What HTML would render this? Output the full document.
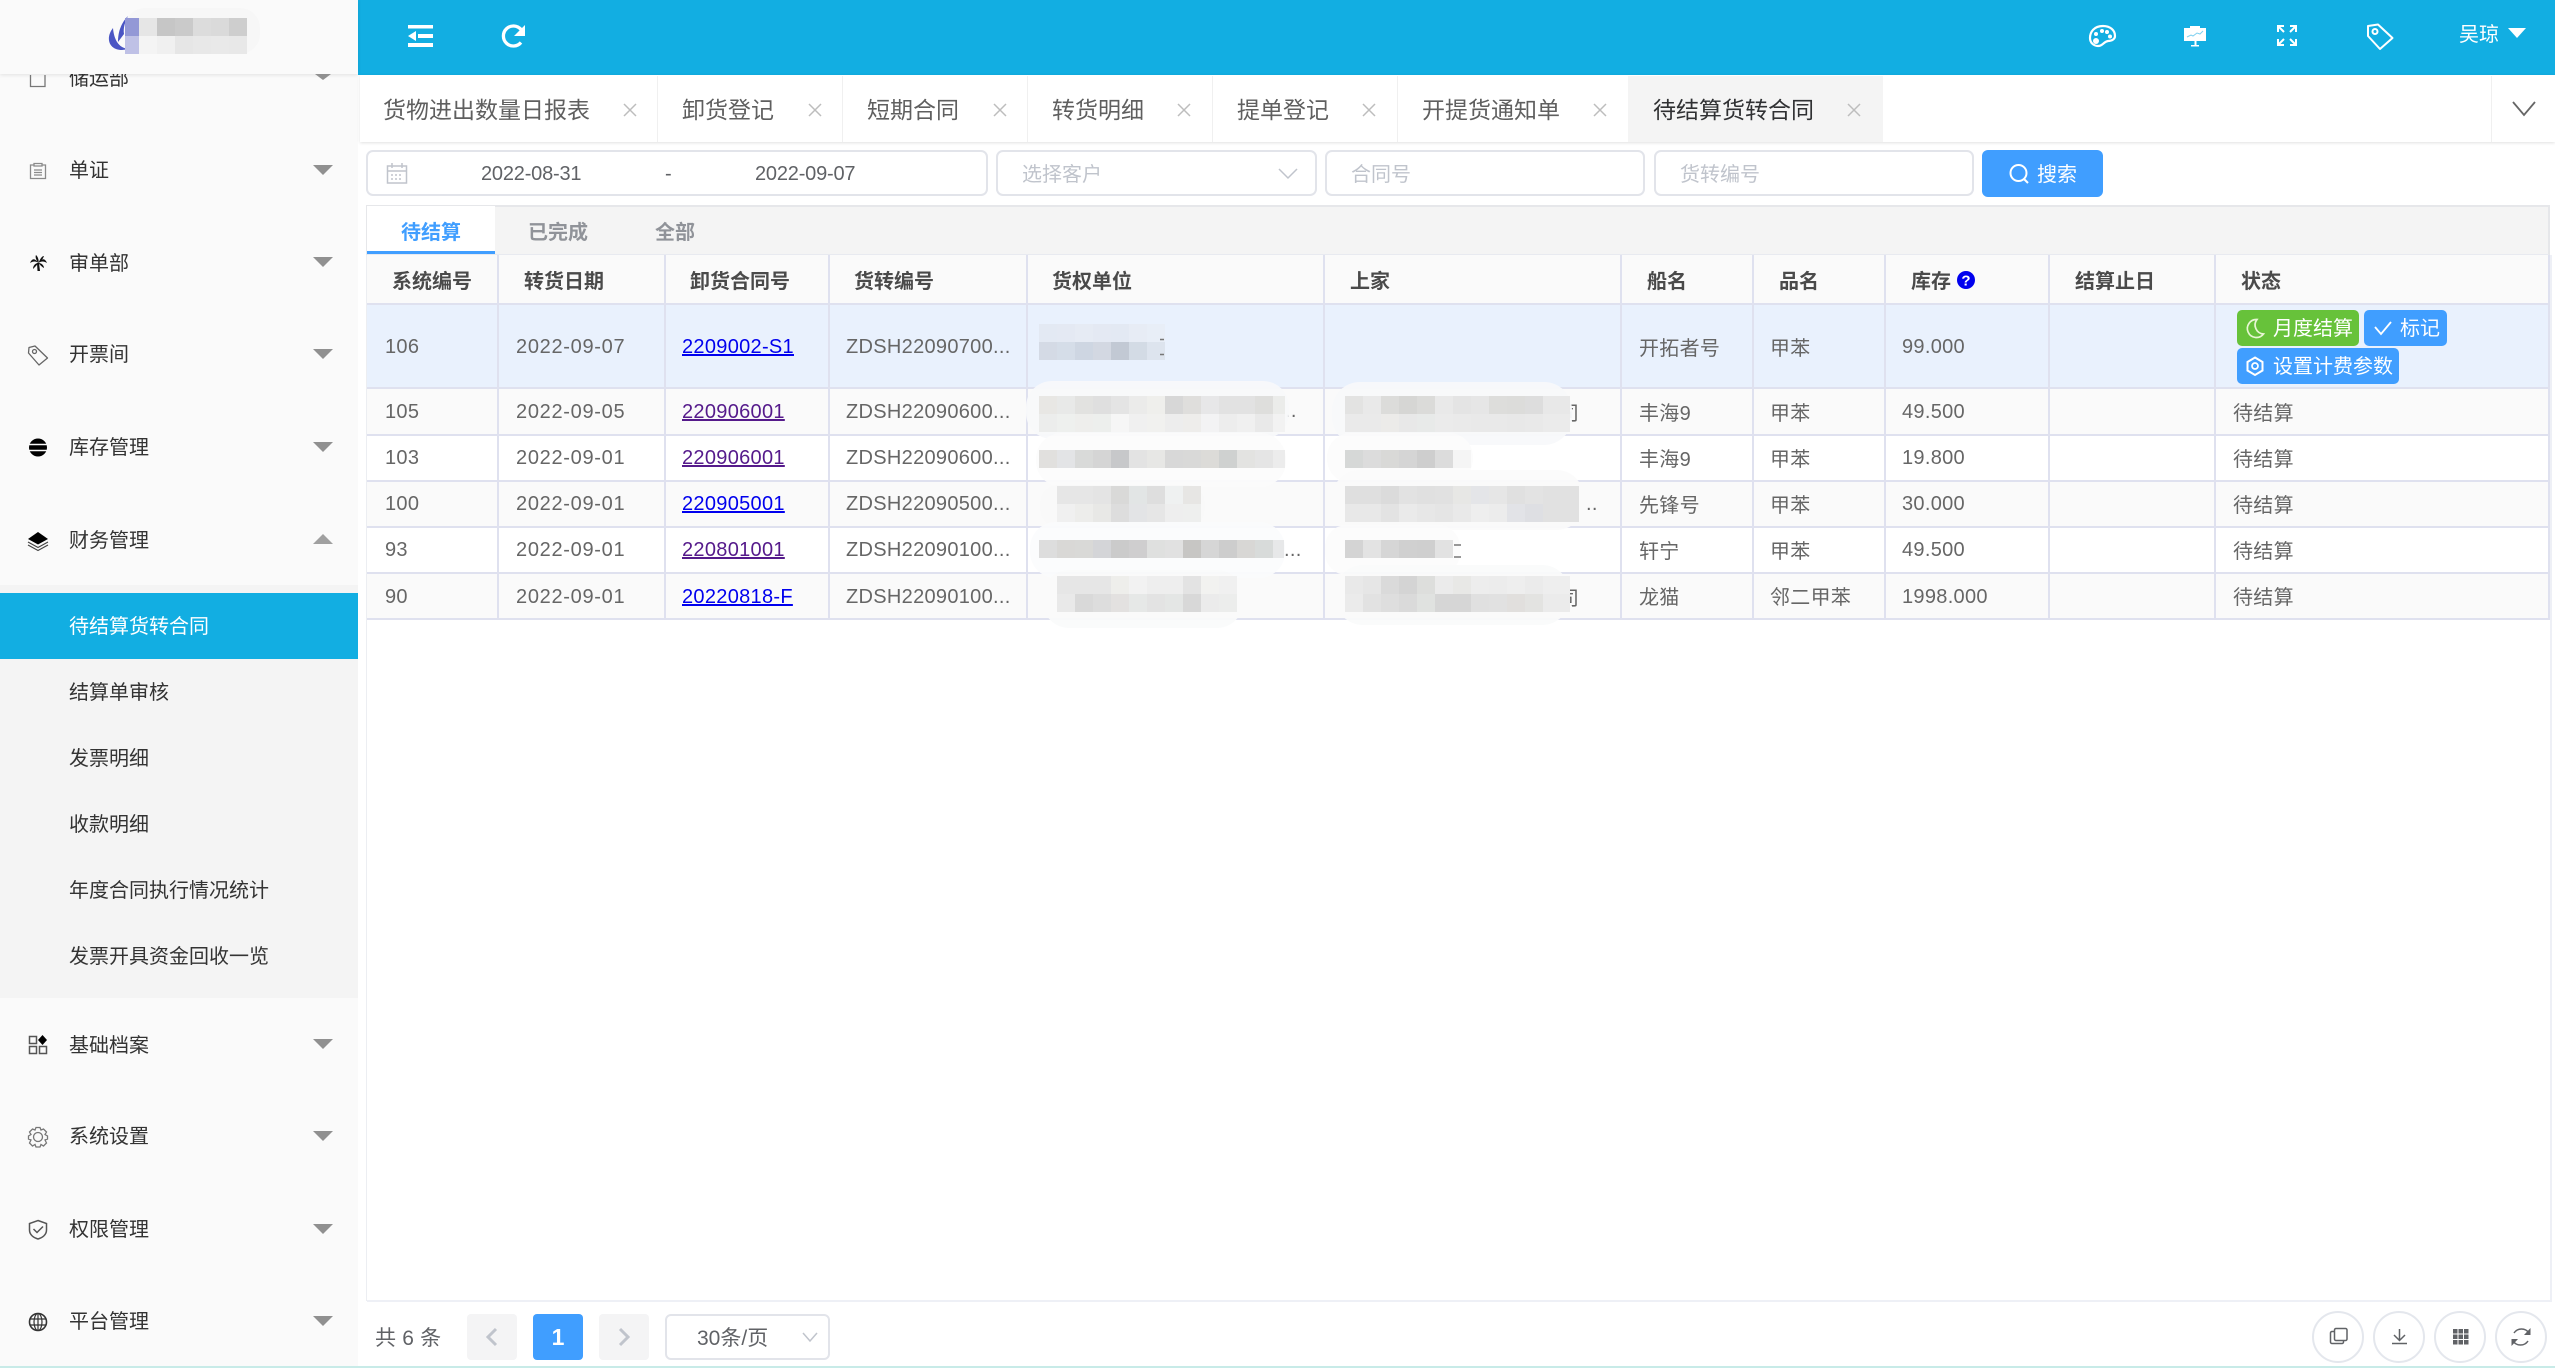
<!DOCTYPE html>
<html lang="zh-CN">
<head>
<meta charset="utf-8">
<title>待结算货转合同</title>
<style>
html,body{margin:0;padding:0;width:2555px;height:1368px;overflow:hidden;background:#fff}
body{position:relative;font-family:"Liberation Sans","Noto Sans CJK SC",sans-serif;font-size:20px;color:#606266}
.a{position:absolute}
.t{position:absolute;white-space:nowrap;line-height:30px;height:30px}
#side{position:absolute;left:0;top:0;width:358px;height:1366px;background:#fafafa;overflow:hidden}
#sub{position:absolute;left:0;top:585px;width:358px;height:413px;background:#f4f4f4}
#act{position:absolute;left:0;top:593px;width:358px;height:66px;background:#12aee2}
#side .t{left:69px;color:#333}
#logo{position:absolute;left:0;top:0;width:358px;height:74px;background:#fafafa;box-shadow:0 1px 4px rgba(0,0,0,.1);z-index:3}
#top{position:absolute;left:358px;top:0;width:2197px;height:75px;background:#12aee2}
#tabs{position:absolute;left:360px;top:75px;width:2195px;height:67px;background:#fff;box-shadow:0 1px 3px rgba(0,0,0,.12)}
.sep{position:absolute;top:76px;width:1px;height:66px;background:#f0f0f0}
.tb{font-size:23px;color:#5f5f5f;top:95px}
.box{position:absolute;top:150px;height:42px;border:2px solid #e2e4ea;border-radius:7px;background:#fff}
.ph{color:#c0c4cc;top:160px}
#card{position:absolute;left:366px;top:205px;width:2180px;height:47px;background:#f4f4f4;border:2px solid #e6e7ea;border-bottom:2px solid #e8eaf0}
#cact{position:absolute;left:367px;top:206px;width:128px;height:45px;background:#fff;border-bottom:3px solid #409eff}
.ct{top:218px;font-weight:700;color:#909399}
table{position:absolute;left:367px;top:255px;width:2183px;border-collapse:separate;border-spacing:0;table-layout:fixed}
th,td{box-sizing:border-box;padding:0 0 0 17px;text-align:left;white-space:nowrap;overflow:hidden;border-right:2px solid #dfe1ef;border-bottom:2px solid #dfe1ef;font-size:20px;font-weight:400;color:#666;letter-spacing:.3px}
th{height:50px;background:#fafafa;font-weight:700;color:#4a4a4a;padding-left:25px;letter-spacing:0}
tr.r0 td{background:#e9f1fd}
tr.r1 td{background:#fafafa}
tr.r2 td{background:#fff}
td:first-child{padding-left:18px}
td:nth-child(3),td:nth-child(4){padding-left:16px}
th:nth-child(3),th:nth-child(4),th:nth-child(5){padding-left:24px}
td:nth-child(8),td:nth-child(9){padding-left:16px}
td.l{padding-top:2px}
td.k{padding-bottom:2px}
.d{letter-spacing:.7px}
a{color:#0000ee;text-decoration:underline}
a.v{color:#551a8b}
.btn{position:absolute;height:36px;border-radius:5px;color:#fff;line-height:38px;font-size:20px;white-space:nowrap;box-sizing:border-box}
.pg{position:absolute;top:1314px;width:50px;height:46px;border-radius:4px;background:#f4f4f5;text-align:center;line-height:46px}
.cir{position:absolute;top:1311px;width:48px;height:48px;border:2px solid #e4e7ed;border-radius:50%;background:#fff}
.c rect{width:18px;height:18px}
</style>
</head>
<body>

<aside id="side">
  <div id="sub"></div>
  <div id="act"></div>
  <div class="t" style="top:64px">储运部</div>
  <div class="t" style="top:156px">单证</div>
  <div class="t" style="top:249px">审单部</div>
  <div class="t" style="top:340px">开票间</div>
  <div class="t" style="top:433px">库存管理</div>
  <div class="t" style="top:526px">财务管理</div>
  <div class="t" style="top:612px;color:#fff">待结算货转合同</div>
  <div class="t" style="top:678px">结算单审核</div>
  <div class="t" style="top:744px">发票明细</div>
  <div class="t" style="top:810px">收款明细</div>
  <div class="t" style="top:876px">年度合同执行情况统计</div>
  <div class="t" style="top:942px">发票开具资金回收一览</div>
  <div class="t" style="top:1031px">基础档案</div>
  <div class="t" style="top:1122px">系统设置</div>
  <div class="t" style="top:1215px">权限管理</div>
  <div class="t" style="top:1307px">平台管理</div>
</aside>
<div id="logo"></div>

<header id="top"></header>
<div class="t" style="left:2459px;top:20px;color:#fff;font-size:20px">吴琼</div>

<nav id="tabs"></nav>
<div class="a" style="left:1628px;top:76px;width:255px;height:66px;background:#f4f4f4"></div>
<div class="sep" style="left:657px"></div>
<div class="sep" style="left:842px"></div>
<div class="sep" style="left:1027px"></div>
<div class="sep" style="left:1212px"></div>
<div class="sep" style="left:1397px"></div>
<div class="sep" style="left:2491px"></div>
<div class="t tb" style="left:383px">货物进出数量日报表</div>
<div class="t tb" style="left:682px">卸货登记</div>
<div class="t tb" style="left:867px">短期合同</div>
<div class="t tb" style="left:1052px">转货明细</div>
<div class="t tb" style="left:1237px">提单登记</div>
<div class="t tb" style="left:1422px">开提货通知单</div>
<div class="t tb" style="left:1653px;color:#303133">待结算货转合同</div>

<div class="box" style="left:366px;width:618px"></div>
<div class="t" style="left:481px;top:159px;letter-spacing:-.2px">2022-08-31</div>
<div class="t" style="left:665px;top:159px">-</div>
<div class="t" style="left:755px;top:159px;letter-spacing:-.2px">2022-09-07</div>
<div class="box" style="left:996px;width:317px"></div>
<div class="t ph" style="left:1022px">选择客户</div>
<div class="box" style="left:1325px;width:316px"></div>
<div class="t ph" style="left:1351px">合同号</div>
<div class="box" style="left:1654px;width:316px"></div>
<div class="t ph" style="left:1680px">货转编号</div>
<div class="a" style="left:1982px;top:150px;width:121px;height:47px;background:#409eff;border-radius:6px"></div>
<div class="t" style="left:2037px;top:160px;color:#fff">搜索</div>

<div id="card"></div>
<div id="cact"></div>
<div class="t ct" style="left:401px;color:#409eff">待结算</div>
<div class="t ct" style="left:528px">已完成</div>
<div class="t ct" style="left:655px">全部</div>

<table>
<colgroup><col style="width:132px"><col style="width:167px"><col style="width:164px"><col style="width:198px"><col style="width:297px"><col style="width:297px"><col style="width:132px"><col style="width:132px"><col style="width:164px"><col style="width:166px"><col style="width:334px"></colgroup>
<thead><tr><th>系统编号</th><th>转货日期</th><th>卸货合同号</th><th>货转编号</th><th>货权单位</th><th>上家</th><th>船名</th><th>品名</th><th>库存</th><th>结算止日</th><th>状态</th></tr></thead>
<tbody>
<tr class="r0" style="height:84px"><td class="l">106</td><td class="d l">2022-09-07</td><td class="l"><a href="#">2209002-S1</a></td><td class="l">ZDSH22090700...</td><td></td><td></td><td>开拓者号</td><td>甲苯</td><td class="l">99.000</td><td></td><td></td></tr>
<tr class="r1" style="height:47px"><td class="l">105</td><td class="d l">2022-09-05</td><td class="l"><a class="v" href="#">220906001</a></td><td class="l">ZDSH22090600...</td><td style="padding-left:257px">..</td><td style="padding-left:234px">司</td><td>丰海9</td><td>甲苯</td><td class="l">49.500</td><td></td><td>待结算</td></tr>
<tr class="r2" style="height:46px"><td>103</td><td class="d">2022-09-01</td><td><a class="v" href="#">220906001</a></td><td>ZDSH22090600...</td><td></td><td></td><td class="k">丰海9</td><td class="k">甲苯</td><td>19.800</td><td></td><td class="k">待结算</td></tr>
<tr class="r1" style="height:46px"><td>100</td><td class="d">2022-09-01</td><td><a href="#">220905001</a></td><td>ZDSH22090500...</td><td></td><td style="padding-left:261px">..</td><td class="k">先锋号</td><td class="k">甲苯</td><td>30.000</td><td></td><td class="k">待结算</td></tr>
<tr class="r2" style="height:46px"><td>93</td><td class="d">2022-09-01</td><td><a class="v" href="#">220801001</a></td><td>ZDSH22090100...</td><td style="padding-left:256px">...</td><td></td><td class="k">轩宁</td><td class="k">甲苯</td><td>49.500</td><td></td><td class="k">待结算</td></tr>
<tr class="r1" style="height:46px"><td class="l">90</td><td class="d l">2022-09-01</td><td class="l"><a href="#">20220818-F</a></td><td class="l">ZDSH22090100...</td><td></td><td style="padding-left:234px">司</td><td class="k">龙猫</td><td class="k">邻二甲苯</td><td class="l">1998.000</td><td></td><td class="k">待结算</td></tr>
</tbody>
</table>

<div class="btn" style="left:2237px;top:310px;width:122px;background:#67c23a;padding-left:36px">月度结算</div>
<div class="btn" style="left:2364px;top:310px;width:83px;background:#409eff;padding-left:36px">标记</div>
<div class="btn" style="left:2237px;top:348px;width:162px;background:#409eff;padding-left:36px">设置计费参数</div>

<div class="a" style="left:366px;top:255px;width:1px;height:1046px;background:#eceef2"></div>
<div class="a" style="left:2550px;top:255px;width:2px;height:1046px;background:#eef0f6"></div>
<div class="a" style="left:367px;top:1300px;width:2185px;height:2px;background:#eef0f6"></div>

<div class="t" style="left:375px;top:1324px;font-size:21px;letter-spacing:.2px">共 6 条</div>
<div class="pg" style="left:467px"></div>
<div class="pg" style="left:533px;background:#409eff;color:#fff;font-weight:700;font-size:23px">1</div>
<div class="pg" style="left:599px"></div>
<div class="a" style="left:665px;top:1314px;width:161px;height:42px;border:2px solid #e2e4ea;border-radius:6px"></div>
<div class="t" style="left:697px;top:1324px;font-size:21px">30条/页</div>
<div class="cir" style="left:2312px"></div>
<div class="cir" style="left:2373px"></div>
<div class="cir" style="left:2434px"></div>
<div class="cir" style="left:2495px"></div>

<!-- redaction mosaics -->
<svg class="a" style="left:0;top:0;z-index:2" width="2555" height="1368" viewBox="0 0 2555 1368">
<g fill="#f8f9fb" opacity=".96">
<rect x="1026" y="381" width="263" height="58" rx="26"/>
<rect x="1036" y="433" width="250" height="54" rx="26" fill="#fcfcfc"/>
<rect x="1040" y="485" width="165" height="42" rx="18" fill="#f9f9f9"/>
<rect x="1030" y="522" width="255" height="56" rx="26" fill="#fbfcfd"/>
<rect x="1043" y="570" width="200" height="58" rx="26" fill="#fafbfb"/>
<rect x="1332" y="382" width="240" height="63" rx="28"/>
<rect x="1327" y="433" width="146" height="50" rx="24" fill="#fcfcfc"/>
<rect x="1333" y="470" width="250" height="60" rx="26" fill="#fbfbfb"/>
<rect x="1325" y="525" width="135" height="50" rx="22" fill="#fcfcfc"/>
<rect x="1335" y="565" width="235" height="60" rx="28" fill="#fafbfb"/>
</g>
<g class="c">
<g transform="translate(1039,324)"><rect x="0" fill="#e3e9f3"/><rect x="18" fill="#e4e9f3"/><rect x="36" fill="#e6ebf4"/><rect x="54" fill="#e4e9f3"/><rect x="72" fill="#e3e9f3"/><rect x="90" fill="#e7ecf5"/><rect x="108" fill="#e8eef7"/></g>
<g transform="translate(1039,342)"><rect x="0" fill="#d4dae5"/><rect x="18" fill="#d5dde8"/><rect x="36" fill="#ced6e2"/><rect x="54" fill="#d3d8e2"/><rect x="72" fill="#c2c9d4"/><rect x="90" fill="#d3dbe5"/><rect x="108" fill="#dde4ee"/></g>
<g transform="translate(1039,396)"><rect x="0" fill="#e8e7e4"/><rect x="18" fill="#e8e9e8"/><rect x="36" fill="#e2e2e0"/><rect x="54" fill="#dfdfdf"/><rect x="72" fill="#e4e4e4"/><rect x="90" fill="#ebebea"/><rect x="108" fill="#efefec"/><rect x="126" fill="#d7d7d7"/><rect x="144" fill="#dfdedc"/><rect x="162" fill="#e7e7e8"/><rect x="180" fill="#e2e2e2"/><rect x="198" fill="#e2e2e2"/><rect x="216" fill="#dededc"/><rect x="234" style="width:12px" fill="#ebecea"/></g>
<g transform="translate(1039,414)"><rect x="0" fill="#ecedec"/><rect x="18" fill="#eef0ee"/><rect x="36" fill="#eeeeec"/><rect x="54" fill="#edefed"/><rect x="72" fill="#f6f6f6"/><rect x="90" fill="#f0f0f0"/><rect x="108" fill="#f1f1ef"/><rect x="126" fill="#ededed"/><rect x="144" fill="#eeedeb"/><rect x="162" fill="#f3f3f4"/><rect x="180" fill="#ededed"/><rect x="198" fill="#f0f0f0"/><rect x="216" fill="#e9e9e9"/><rect x="234" style="width:12px" fill="#f2f2f2"/></g>
<g transform="translate(1039,450)"><rect x="0" fill="#e1e0de"/><rect x="18" fill="#e3e4e6"/><rect x="36" fill="#d9dad9"/><rect x="54" fill="#d5d5d5"/><rect x="72" fill="#c7c8ca"/><rect x="90" fill="#e3e3e3"/><rect x="108" fill="#e7e7e5"/><rect x="126" fill="#d8d8d8"/><rect x="144" fill="#d9d9d8"/><rect x="162" fill="#dcdbd8"/><rect x="180" fill="#cfd1d0"/><rect x="198" fill="#e3e3e1"/><rect x="216" fill="#e5e5e5"/><rect x="234" style="width:12px" fill="#ececec"/></g>
<g transform="translate(1057,486)"><rect x="0" fill="#e6e6e6"/><rect x="18" fill="#e6e6e6"/><rect x="36" fill="#e4e4e4"/><rect x="54" fill="#d9d9d8"/><rect x="72" fill="#e2e5e5"/><rect x="90" fill="#dedede"/><rect x="108" fill="#eff1f1"/><rect x="126" fill="#e7e6e4"/></g>
<g transform="translate(1057,504)"><rect x="0" fill="#f0f0f0"/><rect x="18" fill="#ededeb"/><rect x="36" fill="#e8e8e6"/><rect x="54" fill="#dddddd"/><rect x="72" fill="#e3e4e6"/><rect x="90" fill="#e6e6e6"/><rect x="108" fill="#eeeeee"/><rect x="126" fill="#eeefee"/></g>
<g transform="translate(1039,540)"><rect x="0" fill="#dddddd"/><rect x="18" fill="#d9d8d6"/><rect x="36" fill="#d9d9d7"/><rect x="54" fill="#d4d5d8"/><rect x="72" fill="#cbcbcb"/><rect x="90" fill="#cfcecf"/><rect x="108" fill="#dfe0df"/><rect x="126" fill="#e1e1e1"/><rect x="144" fill="#c7c6c4"/><rect x="162" fill="#d6d6d6"/><rect x="180" fill="#cdcdcd"/><rect x="198" fill="#d8d7d5"/><rect x="216" fill="#d8dbda"/><rect x="234" style="width:11px" fill="#e7e8e9"/></g>
<g transform="translate(1057,576)"><rect x="0" fill="#e6e6e6"/><rect x="18" fill="#e6e6e6"/><rect x="36" fill="#e6e6e6"/><rect x="54" fill="#eeeeeb"/><rect x="72" fill="#f2f2f2"/><rect x="90" fill="#eeeeee"/><rect x="108" fill="#eeeeee"/><rect x="126" fill="#e3e3e3"/><rect x="144" fill="#f2f2f0"/><rect x="162" fill="#f0f0f0"/></g>
<g transform="translate(1057,594)"><rect x="0" fill="#e9e9e9"/><rect x="18" fill="#d9d9d9"/><rect x="36" fill="#dddddd"/><rect x="54" fill="#e3e1e0"/><rect x="72" fill="#e6e8e7"/><rect x="90" fill="#e3e3e3"/><rect x="108" fill="#e4e6e5"/><rect x="126" fill="#d8d8d8"/><rect x="144" fill="#ebebeb"/><rect x="162" fill="#ecedec"/></g>

<g transform="translate(1345,396)"><rect x="0" fill="#e3e3e2"/><rect x="18" fill="#e9e9e9"/><rect x="36" fill="#dcdcda"/><rect x="54" fill="#d6d6d4"/><rect x="72" fill="#dbdbd9"/><rect x="90" fill="#e9e9e9"/><rect x="108" fill="#e4e4e4"/><rect x="126" fill="#e6e6e6"/><rect x="144" fill="#dddddb"/><rect x="162" fill="#dcdcda"/><rect x="180" fill="#dddddd"/><rect x="198" fill="#e8e8e8"/><rect x="216" style="width:9px" fill="#e8e8e8"/></g>
<g transform="translate(1345,414)"><rect x="0" fill="#eaeaea"/><rect x="18" fill="#eaeaea"/><rect x="36" fill="#ecebe9"/><rect x="54" fill="#e8e8e8"/><rect x="72" fill="#e8eae9"/><rect x="90" fill="#ebebeb"/><rect x="108" fill="#eaeaea"/><rect x="126" fill="#e9e9e9"/><rect x="144" fill="#e9e9e9"/><rect x="162" fill="#e8e8e8"/><rect x="180" fill="#e9e9e9"/><rect x="198" fill="#ebebeb"/><rect x="216" style="width:9px" fill="#ebebeb"/></g>
<g transform="translate(1345,450)"><rect x="0" fill="#d6d8d7"/><rect x="18" fill="#dcdcdc"/><rect x="36" fill="#d9d9d7"/><rect x="54" fill="#d5d5d5"/><rect x="72" fill="#cecece"/><rect x="90" fill="#dcdcdc"/><rect x="108" fill="#f5f5f5"/></g>
<g transform="translate(1345,486)"><rect x="0" fill="#dfdfdf"/><rect x="18" fill="#dfdfdf"/><rect x="36" fill="#dbdbdb"/><rect x="54" fill="#e2e2e2"/><rect x="72" fill="#e0e0e0"/><rect x="90" fill="#e1e1e1"/><rect x="108" fill="#e7e7e5"/><rect x="126" fill="#e4e5e8"/><rect x="144" fill="#e6e6e6"/><rect x="162" fill="#e0e0e0"/><rect x="180" fill="#e3e3e3"/><rect x="198" fill="#e1e1e1"/><rect x="216" fill="#e1e1e1"/></g>
<g transform="translate(1345,504)"><rect x="0" fill="#e8e8e8"/><rect x="18" fill="#e8e8e8"/><rect x="36" fill="#e3e3e3"/><rect x="54" fill="#eaeaea"/><rect x="72" fill="#e7e7e7"/><rect x="90" fill="#e5e5e5"/><rect x="108" fill="#e9e9e9"/><rect x="126" fill="#eeeeee"/><rect x="144" fill="#ececec"/><rect x="162" fill="#e2e3e7"/><rect x="180" fill="#dedfe3"/><rect x="198" fill="#e1e1e1"/><rect x="216" fill="#e1e1e1"/></g>
<g transform="translate(1345,540)"><rect x="0" fill="#d4d4d4"/><rect x="18" fill="#e3e3e3"/><rect x="36" fill="#d6d6d6"/><rect x="54" fill="#d0d0d0"/><rect x="72" fill="#cfcfcf"/><rect x="90" fill="#e2e2e2"/></g>
<g transform="translate(1345,576)"><rect x="0" fill="#e9e9e9"/><rect x="18" fill="#e6e6e6"/><rect x="36" fill="#dadada"/><rect x="54" fill="#d4d4d4"/><rect x="72" fill="#dddedc"/><rect x="90" fill="#ebebeb"/><rect x="108" fill="#e8e8e6"/><rect x="126" fill="#ededed"/><rect x="144" fill="#ececec"/><rect x="162" fill="#eeeeee"/><rect x="180" fill="#ebebeb"/><rect x="198" fill="#eeeeee"/><rect x="216" style="width:9px" fill="#eeeeee"/></g>
<g transform="translate(1345,594)"><rect x="0" fill="#ebebeb"/><rect x="18" fill="#e2e2e2"/><rect x="36" fill="#dedede"/><rect x="54" fill="#dadada"/><rect x="72" fill="#e0e2e0"/><rect x="90" fill="#d6d6d6"/><rect x="108" fill="#d6d6d6"/><rect x="126" fill="#e0e0e0"/><rect x="144" fill="#e1e1e1"/><rect x="162" fill="#e1dfdd"/><rect x="180" fill="#e3e3e1"/><rect x="198" fill="#ebebeb"/><rect x="216" style="width:9px" fill="#ebebeb"/></g>
</g>
<path d="M1160 339.500h4M1160 354.500h4M1454 545h7M1454 557h7" stroke="#777" stroke-width="1.500" fill="none"/>
</svg>

<!-- icons -->
<svg class="a" style="left:0;top:0;z-index:4" width="2555" height="1368" viewBox="0 0 2555 1368">
<!-- logo -->
<g>
<rect x="125" y="8" width="135" height="46" rx="20" fill="#f7f7f7"/>
<path d="M128 16C120 24 118 34 118 42L124 34C123 28 125 22 128 16Z" fill="#4a55c4"/>
<path d="M113 28C105 38 109 50 122 50L130 49C119 49 114 40 113 28Z" fill="#4a55c4"/>
<g class="c">
<g transform="translate(125,18)"><rect x="0" style="width:14px" fill="#9398d6"/><rect x="14" fill="#e6e6e6"/><rect x="32" fill="#c6c6c6"/><rect x="50" fill="#cacaca"/><rect x="68" fill="#dcdcdc"/><rect x="86" fill="#dadada"/><rect x="104" fill="#cecece"/></g>
<g transform="translate(125,36)"><rect x="0" style="width:14px" fill="#bfc1e6"/><rect x="14" fill="#f4f4f4"/><rect x="32" fill="#f0f0f0"/><rect x="50" fill="#e6e6e6"/><rect x="68" fill="#e8e8e8"/><rect x="86" fill="#e9e9e9"/><rect x="104" fill="#e8e8e8"/></g>
</g>
</g>

<!-- sidebar chevrons -->
<g fill="#909090">
<path d="M315 74H331L323 80Z"/>
<path d="M313 165H333L323 175Z"/>
<path d="M313 257H333L323 267Z"/>
<path d="M313 349H333L323 359Z"/>
<path d="M313 442H333L323 452Z"/>
<path d="M313 544H333L323 534Z" fill="#a0a0a0"/>
<path d="M313 1039H333L323 1049Z"/>
<path d="M313 1131H333L323 1141Z"/>
<path d="M313 1224H333L323 1234Z"/>
<path d="M313 1316H333L323 1326Z"/>
</g>
<!-- sidebar icons -->
<path d="M30.500 75V86.500H45V75" fill="none" stroke="#777" stroke-width="1.300"/>
<g fill="none" stroke="#8a8a8a" stroke-width="1.300">
<path d="M34 165H30.500V178.500H45.500V165H42"/><path d="M34 166V163.500H42V166ZM34 170H42M34 172.500H42M34 175H42"/>
</g>
<g fill="#111">
<path d="M37 263L37.500 271H40L39 263Z"/>
<path d="M38.500 263C35 258 32 258 30 263C33 261 36 261 38.500 263Z"/>
<path d="M38.500 263C42 258 45 258 47 263C44 261 41 261 38.500 263Z"/>
<path d="M38.500 263C36 260 35 257 36 255C38 257 39 260 38.500 263Z"/>
<path d="M38.500 263C40 259 42 256 44 256C43 259 41 261 38.500 263Z"/>
<path d="M38.500 263C35 263 33 266 33 269C35 267 37 265 38.500 263Z"/>
<path d="M38.500 263C42 263 44 266 44 268C42 267 40 265 38.500 263Z"/>
</g>
<g fill="none" stroke="#666" stroke-width="1.300" stroke-linejoin="round">
<path d="M29 347.500L35 346L47.500 358L39 365L28.500 353Z"/><circle cx="34.500" cy="351.500" r="2"/>
</g>
<circle cx="38" cy="447.500" r="9" fill="#000"/>
<path d="M29 444.500H47M29 450.500H47" stroke="#fafafa" stroke-width="1.600"/>
<path d="M28 539L38 532L48 539L38 544.500Z" fill="#000"/>
<path d="M28 542L38 547.500L48 542M28 545L38 550.500L48 545" fill="none" stroke="#444" stroke-width="1.200"/>
<g fill="none" stroke="#555" stroke-width="1.500">
<rect x="29.500" y="1036.500" width="7" height="7"/><rect x="29.500" y="1046.500" width="7" height="7"/><rect x="39.500" y="1046.500" width="7" height="7"/>
</g>
<path d="M42.500 1035L47 1040L42.500 1045L38 1040Z" fill="#000"/>
<g fill="none" stroke="#777" stroke-width="1.300">
<circle cx="38" cy="1137" r="4.500"/>
<path d="M36 1127.500H40L41 1130L43.500 1129L46.500 1132L45 1134.500L47.500 1136V1139L45 1140L46.500 1143L43.500 1146L41 1144.500L40 1147H36L35 1144.500L32.500 1146L29.500 1143L31 1140L28.500 1139V1136L31 1134.500L29.500 1132L32.500 1129L35 1130Z"/>
</g>
<g fill="none" stroke="#555" stroke-width="1.500">
<path d="M38 1220.500L46.500 1223.500V1230C46.500 1235 42 1238 38 1239C34 1238 29.500 1235 29.500 1230V1223.500Z"/>
<path d="M33.500 1229L37 1232.500L43 1226.500"/>
</g>
<g fill="none" stroke="#333" stroke-width="1.200">
<circle cx="38" cy="1322" r="8.500" stroke-width="1.600"/><ellipse cx="38" cy="1322" rx="4" ry="8.500"/><path d="M38 1313.500V1330.500M30 1319H46M30 1325H46"/>
</g>

<!-- top bar -->
<g fill="#fff">
<path d="M408 25H433V28.500H408ZM418 34H433V38H418ZM408 43H433V47H408ZM416 31V41L408 36Z"/>
<path d="M525 25V36H514Z"/>
</g>
<path d="M521 29.500A10 10 0 1 0 521 42.500" fill="none" stroke="#fff" stroke-width="3.300"/>
<g fill="none" stroke="#fff" stroke-width="2.200" stroke-linejoin="round">
<path d="M2103 26C2094 26 2090 32 2090 38C2090 43 2094 46 2098 46C2103 46 2103 42 2108 41C2112 41 2115 39 2115 36C2115 30 2110 26 2103 26Z"/>
</g>
<g fill="#fff">
<circle cx="2096" cy="41" r="3"/><circle cx="2096" cy="34" r="2"/><circle cx="2102" cy="31" r="2"/><circle cx="2107" cy="32" r="2"/><circle cx="2110" cy="36.500" r="2"/>
<rect x="2190" y="26" width="10" height="3"/><rect x="2184" y="28" width="22" height="13"/><rect x="2194.500" y="41" width="2" height="5"/><rect x="2191" y="45" width="8" height="1.500"/>
</g>
<path d="M2187 37L2191 35L2193 36L2197 33L2200 34L2203 31" fill="none" stroke="#7fd0ef" stroke-width="1"/>
<g fill="none" stroke="#fff" stroke-width="2">
<path d="M2278 32V26H2284M2278 26L2284 32M2290 26H2296V32M2296 26L2290 32M2278 39V45H2284M2278 45L2284 39M2290 45H2296V39M2296 45L2290 39"/>
</g>
<g fill="none" stroke="#fff" stroke-width="2" stroke-linejoin="round">
<path d="M2368 26L2378 24.500L2392.500 38L2380 49L2368 36Z"/><circle cx="2375" cy="31.500" r="2.500"/>
</g>
<path d="M2508 28H2526L2517 38Z" fill="#fff"/>

<!-- tab closes -->
<g fill="none" stroke="#bdbdbd" stroke-width="1.500">
<path d="M624 104L636 116M636 104L624 116"/>
<path d="M809 104L821 116M821 104L809 116"/>
<path d="M994 104L1006 116M1006 104L994 116"/>
<path d="M1178 104L1190 116M1190 104L1178 116"/>
<path d="M1363 104L1375 116M1375 104L1363 116"/>
<path d="M1594 104L1606 116M1606 104L1594 116"/>
<path d="M1848 104L1860 116M1860 104L1848 116"/>
</g>
<path d="M2513 102L2524 115L2535 102" fill="none" stroke="#666" stroke-width="1.800"/>

<!-- filter icons -->
<g fill="none" stroke="#c0c4cc" stroke-width="1.500">
<rect x="387.500" y="166" width="19" height="17"/><path d="M387.500 171H406.500M392 163V168M402 163V168"/>
<path d="M391 175H403M391 179H403" stroke-dasharray="2 2"/>
<path d="M1279 169L1288 178L1297 169"/>
</g>
<g fill="none" stroke="#fff" stroke-width="2">
<circle cx="2018.500" cy="173" r="8"/><path d="M2024 179L2028 183"/>
</g>

<!-- help -->
<circle cx="1966" cy="280" r="9" fill="#0000ee"/>
<text x="1966" y="285.500" text-anchor="middle" font-family="Liberation Sans, sans-serif" font-size="15" font-weight="700" fill="#fff">?</text>

<!-- button icons -->
<path d="M2257 319.500A9 9 0 1 0 2263.500 334A9 9 0 0 1 2257 319.500Z" fill="none" stroke="#e8f6d4" stroke-width="1.700"/>
<path d="M2375 327L2381 334L2391 322" fill="none" stroke="#fff" stroke-width="1.800"/>
<g fill="none" stroke="#fff">
<circle cx="2255" cy="366" r="3" stroke-width="1.700"/>
<path d="M2255 357.500L2262.500 362V370.500L2255 375L2247.500 370.500V362Z" stroke-width="2"/>
</g>

<!-- pagination -->
<g fill="none" stroke="#c0c4cc">
<path d="M496 1329L488 1337L496 1345" stroke-width="3"/>
<path d="M620 1329L628 1337L620 1345" stroke-width="3"/>
<path d="M803 1333L810 1341L817 1333" stroke-width="1.500"/>
</g>
<g fill="none" stroke="#606266" stroke-width="1.500">
<rect x="2334.500" y="1328.500" width="12.500" height="12" rx="1.500"/>
<path d="M2334 1331.500H2332A1.500 1.500 0 0 0 2330.500 1333V1342A1.500 1.500 0 0 0 2332 1343.500H2342A1.500 1.500 0 0 0 2343.500 1342V1341"/>
<path d="M2399.500 1329V1340M2394 1335L2399.500 1340.500L2405 1335M2392 1343.500H2407"/>
<path d="M2514 1333A9 9 0 0 1 2529 1333M2528 1341A9 9 0 0 1 2513 1341"/>
</g>
<path d="M2530.500 1328V1335H2524ZM2511.500 1346V1339H2518Z" fill="#606266"/>
<g fill="#606266">
<rect x="2453" y="1329" width="4.500" height="4.500"/><rect x="2458.500" y="1329" width="4.500" height="4.500"/><rect x="2464" y="1329" width="4.500" height="4.500"/>
<rect x="2453" y="1334.500" width="4.500" height="4.500"/><rect x="2458.500" y="1334.500" width="4.500" height="4.500"/><rect x="2464" y="1334.500" width="4.500" height="4.500"/>
<rect x="2453" y="1340" width="4.500" height="4.500"/><rect x="2458.500" y="1340" width="4.500" height="4.500"/><rect x="2464" y="1340" width="4.500" height="4.500"/>
</g>
</svg>

<div class="a" style="left:0;top:1366px;width:2555px;height:2px;background:#c8ebe8;z-index:5"></div>
</body>
</html>
